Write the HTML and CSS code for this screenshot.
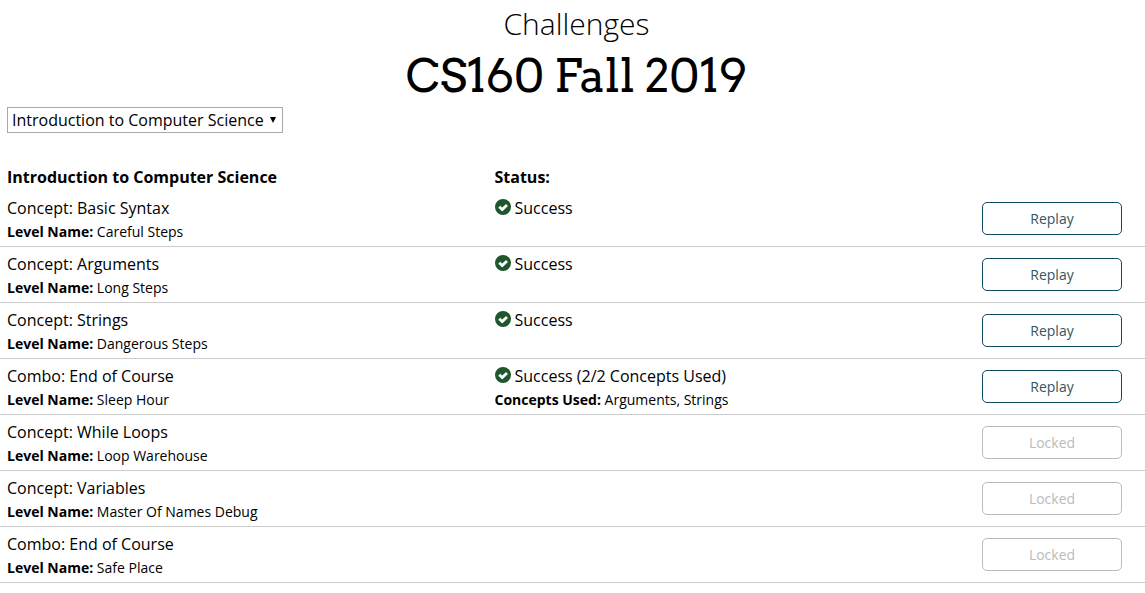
FILE: index.html
```html
<!DOCTYPE html>
<html lang="en">
<head>
<meta charset="utf-8">
<title>Challenges</title>
<link rel="stylesheet" href="styles.css">
</head>
<body>
<svg class="defs" aria-hidden="true"><symbol id="check" viewBox="0 0 16 16"><circle cx="8" cy="8" r="8" fill="#1f562d"/><path d="M4.2 7.8 7.2 10.6 12 5.9" fill="none" stroke="#fff" stroke-width="2.8"/></symbol></svg>
<header class="header">
<h2 class="subtitle">Challenges</h2>
<h1 class="title">CS160 Fall 2019</h1>
</header>
<main>
<div class="picker">
<select class="course" aria-label="Course"><option>Introduction to Computer Science</option></select>
<svg class="arrow" viewBox="0 0 6 6" aria-hidden="true"><path d="M0 0H6L3 6Z"/></svg>
</div>
<table class="levels">
<thead><tr><th>Introduction to Computer Science</th><th>Status:</th><th class="action-head"></th></tr></thead>
<tbody>
<tr><td><p class="concept">Concept: Basic Syntax</p><p class="detail"><b>Level Name:</b> Careful Steps</p></td><td><p class="concept"><svg class="check"><use href="#check"/></svg>Success</p></td><td><button class="action">Replay</button></td></tr>
<tr><td><p class="concept">Concept: Arguments</p><p class="detail"><b>Level Name:</b> Long Steps</p></td><td><p class="concept"><svg class="check"><use href="#check"/></svg>Success</p></td><td><button class="action">Replay</button></td></tr>
<tr><td><p class="concept">Concept: Strings</p><p class="detail"><b>Level Name:</b> Dangerous Steps</p></td><td><p class="concept"><svg class="check"><use href="#check"/></svg>Success</p></td><td><button class="action">Replay</button></td></tr>
<tr><td><p class="concept">Combo: End of Course</p><p class="detail"><b>Level Name:</b> Sleep Hour</p></td><td><p class="concept"><svg class="check"><use href="#check"/></svg>Success (2/2 Concepts Used)</p><p class="detail"><b>Concepts Used:</b> Arguments, Strings</p></td><td><button class="action">Replay</button></td></tr>
<tr><td><p class="concept">Concept: While Loops</p><p class="detail"><b>Level Name:</b> Loop Warehouse</p></td><td></td><td><button class="action" disabled>Locked</button></td></tr>
<tr><td><p class="concept">Concept: Variables</p><p class="detail"><b>Level Name:</b> Master Of Names Debug</p></td><td></td><td><button class="action" disabled>Locked</button></td></tr>
<tr><td><p class="concept">Combo: End of Course</p><p class="detail"><b>Level Name:</b> Safe Place</p></td><td></td><td><button class="action" disabled>Locked</button></td></tr>
</tbody>
</table>
</main>
</body>
</html>
```
FILE: styles.css
```css
* { box-sizing: border-box; }
body { margin: 0; background: #fff; color: #000; font: 16px/24px "Open Sans", sans-serif; }
p, h1, h2 { margin: 0; }
.defs { display: none; }
.header { padding: 4px 0 0 8px; text-align: center; }
.subtitle { font-size: 30px; line-height: 40px; font-weight: 300; }
.title { font: 400 46px/64px "Arvo", "Roboto Slab", "DejaVu Serif", serif; }
.picker { display: grid; width: max-content; margin: -1px 0 32px 7px; align-items: center; }
.course { grid-area: 1 / 1; width: 276px; height: 26px; padding: 0 4px; appearance: none; border: 1px solid #a9a9a9; border-radius: 0; background: #fff; color: #000; font: inherit; }
.arrow { grid-area: 1 / 1; justify-self: end; width: 6px; height: 6px; margin-right: 7px; pointer-events: none; }
.levels { width: 100%; border-spacing: 0; table-layout: fixed; }
.levels th { height: 26px; padding: 0 7px; text-align: left; vertical-align: top; font-weight: 700; }
.levels .action-head { width: 170px; }
.levels td { height: 56px; padding: 5px 7px 2px; vertical-align: top; border-bottom: 1px solid #ccc; }
.concept { line-height: 24px; }
.detail { font-size: 14px; line-height: 23px; }
.check { width: 16px; height: 16px; margin-right: 4px; vertical-align: -1px; }
.action { display: block; width: 140px; height: 33px; margin-top: 6px; padding: 0; border: 1px solid #0b4a5e; border-radius: 5px; background: #fff; color: #34545f; font: 14px "Open Sans", sans-serif; }
.action:disabled { border-color: #bbb; color: #bbb; }
```
